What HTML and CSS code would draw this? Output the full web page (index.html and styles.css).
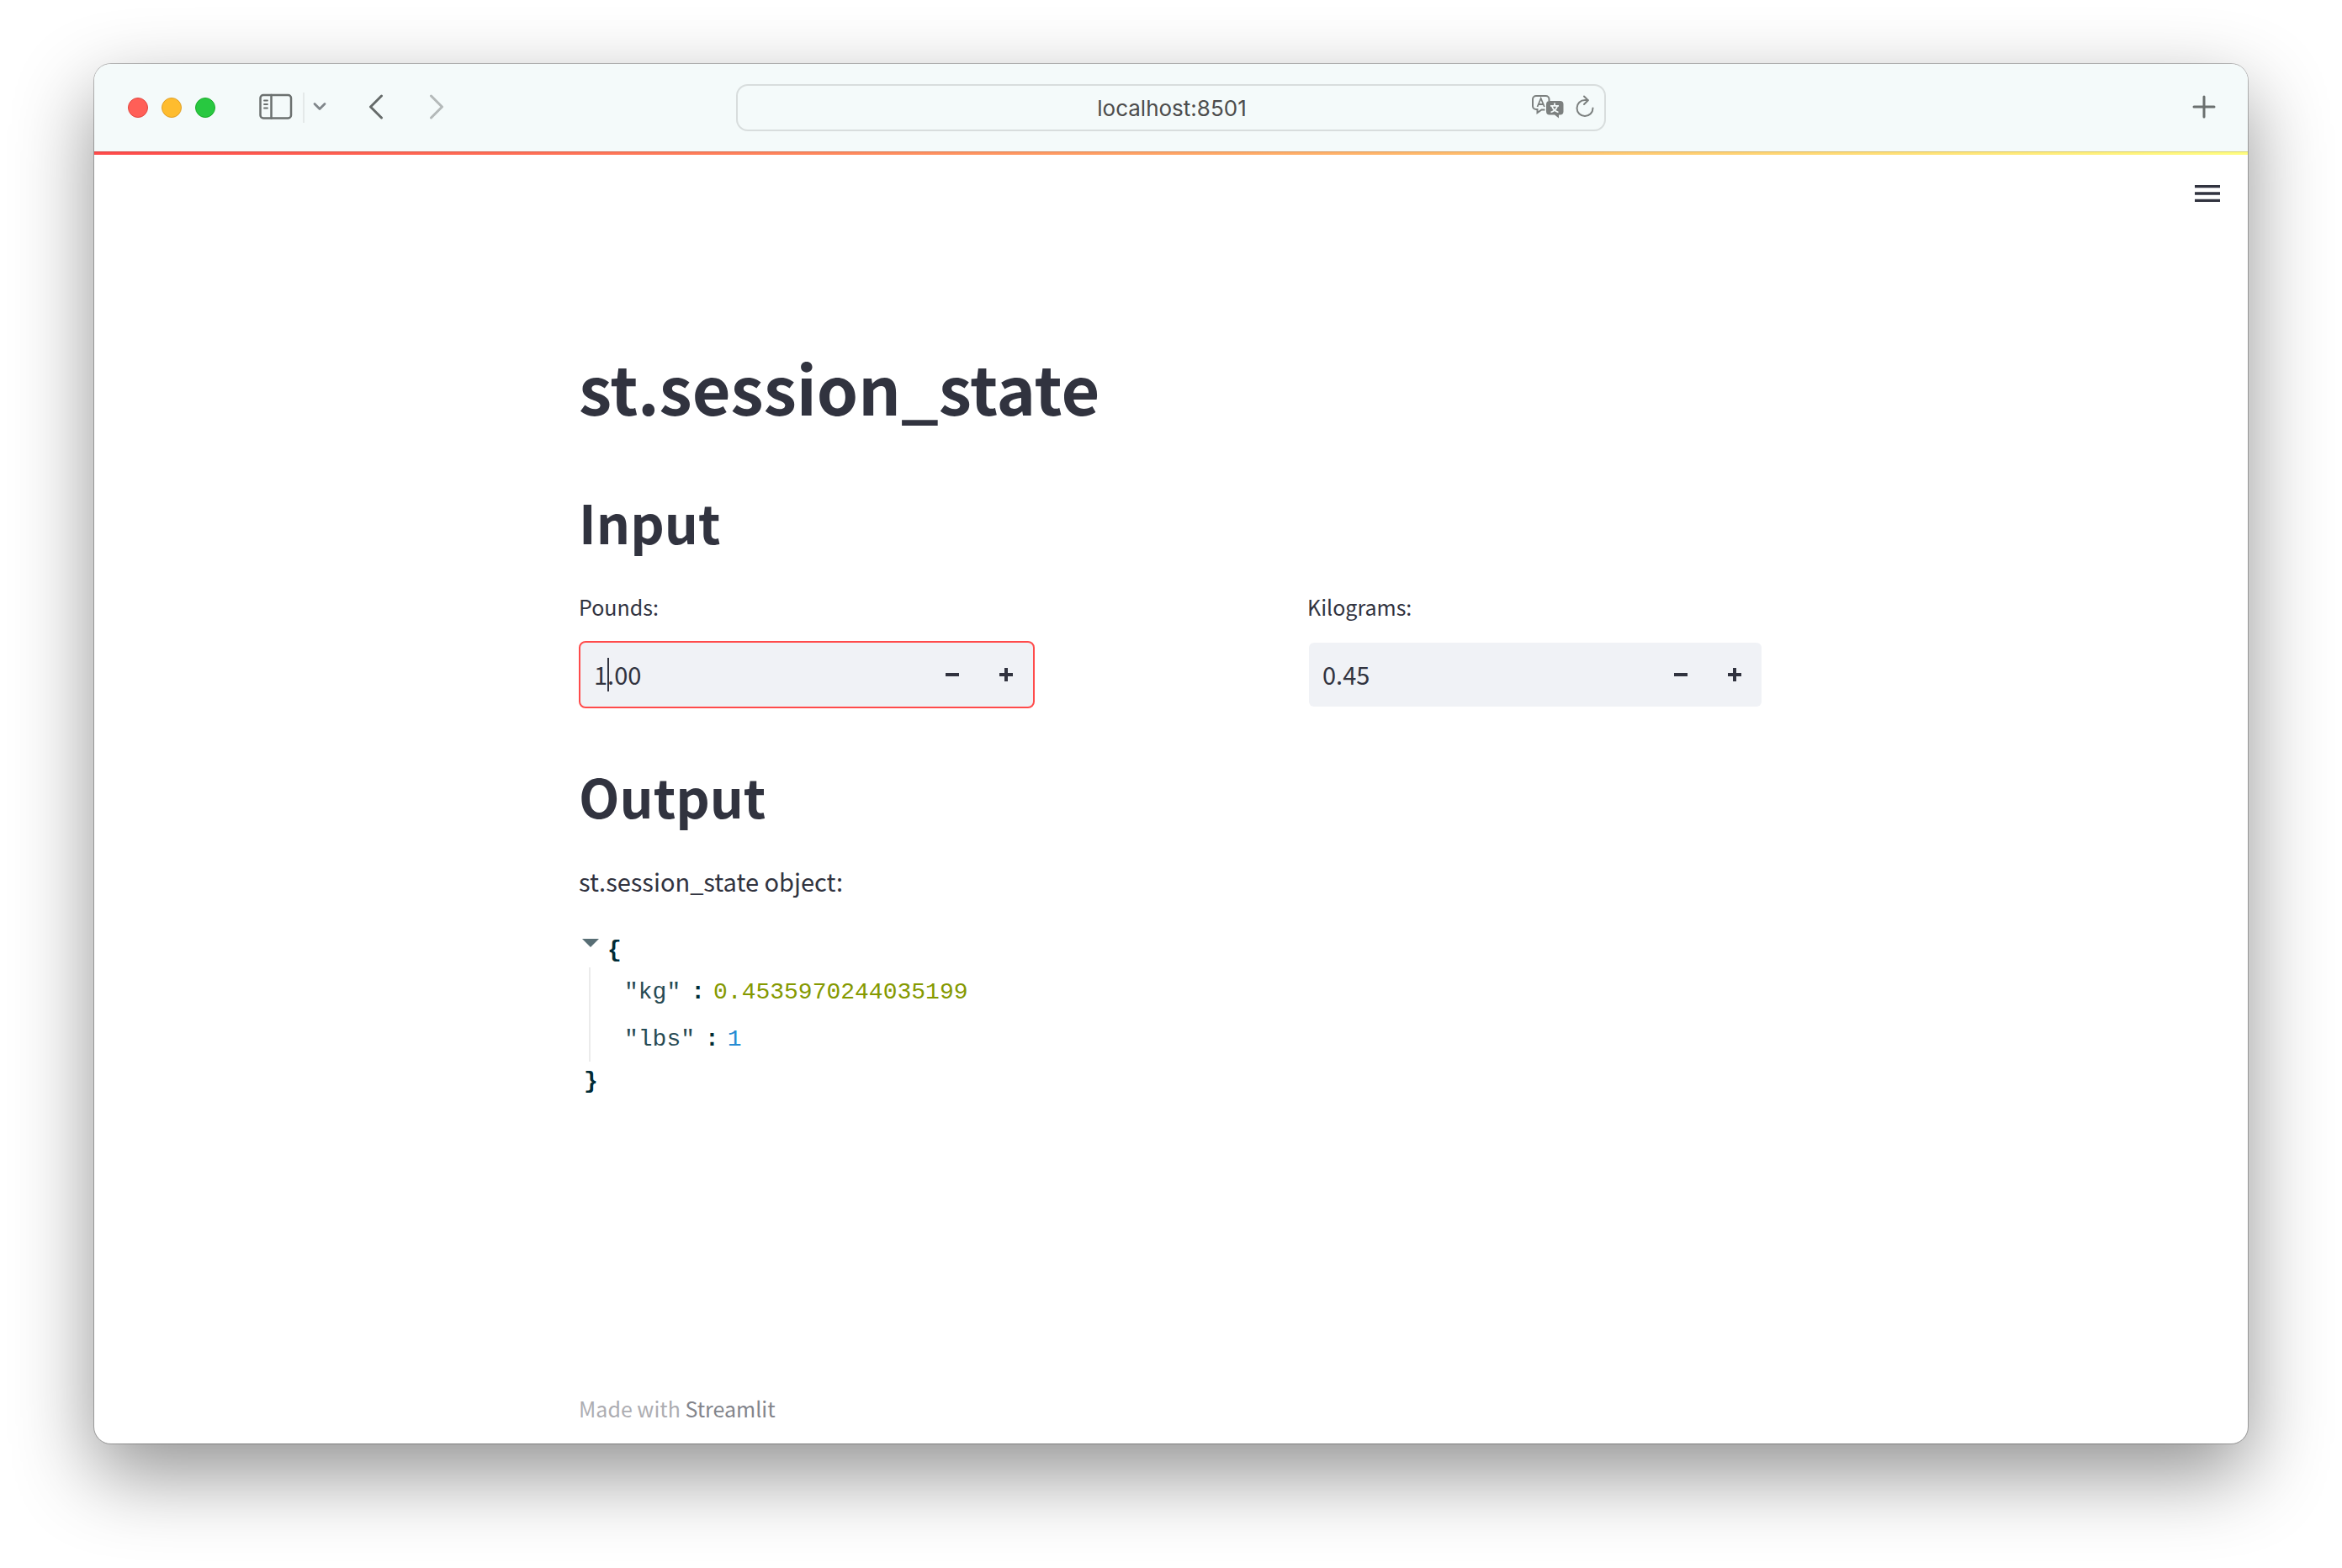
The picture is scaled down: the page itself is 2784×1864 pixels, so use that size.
FILE: index.html
```html
<!DOCTYPE html>
<html lang="en">
<head>
<meta charset="utf-8">
<title>st.session_state</title>
<link rel="stylesheet" href="styles.css">
</head>
<body>
<div class="window">
  <header class="toolbar">
    <div class="toolbar-left">
      <div class="lights">
        <button class="light light-close" aria-label="Close"></button>
        <button class="light light-min" aria-label="Minimize"></button>
        <button class="light light-max" aria-label="Zoom"></button>
      </div>
      <div class="sidebar-tools">
        <button class="tool" aria-label="Show sidebar">
          <svg width="40" height="32" viewBox="0 0 40 32" fill="none" stroke="#6b706f" stroke-width="2.5" stroke-linecap="round"><rect x="1.5" y="2" width="36.500" height="27.500" rx="3.500"/><path d="M14.500 2v27.500"/><path d="M6 8.500h4M6 13h4M6 17.500h4" stroke-width="1.800"/></svg>
        </button>
        <button class="tool tool-menu" aria-label="Sidebar menu">
          <svg width="16" height="12" viewBox="0 0 16 12" fill="none" stroke="#80868a" stroke-width="2.800" stroke-linecap="round" stroke-linejoin="round"><path d="M2 2.500l6 6 6-6"/></svg>
        </button>
      </div>
      <div class="history">
        <button class="tool" aria-label="Back">
          <svg width="18" height="30" viewBox="0 0 18 30" fill="none" stroke="#666b6a" stroke-width="3" stroke-linecap="round" stroke-linejoin="round"><path d="M15.500 2L2.500 15l13 13"/></svg>
        </button>
        <button class="tool" aria-label="Forward">
          <svg width="18" height="30" viewBox="0 0 18 30" fill="none" stroke="#b4b9b9" stroke-width="3" stroke-linecap="round" stroke-linejoin="round"><path d="M2.500 2l13 13-13 13"/></svg>
        </button>
      </div>
    </div>
    <div class="address">
      <input class="address-field" type="text" aria-label="Address" value="localhost:8501">
      <div class="address-tools">
        <button class="tool" aria-label="Translate">
          <svg width="38" height="28" viewBox="0 0 38 28" fill="none"><path d="M15.500 17.500h-4L6.500 21v-4H5a4 4 0 0 1-4-4V5a4 4 0 0 1 4-4h11.500a4 4 0 0 1 4 4v2" stroke="#7c807f" stroke-width="2"/><path d="M6.500 14L10.700 4l4.200 10M8 11h5.500" stroke="#7c807f" stroke-width="1.800"/><path d="M21 7h12.500a4 4 0 0 1 4 4v8.500a4 4 0 0 1-4 4H32v4l-5-4h-6a4 4 0 0 1-4-4V11a4 4 0 0 1 4-4z" fill="#7c807f"/><path d="M27 9.500v3M22 12.800h10M24 13.500c1 3.500 3.500 5.700 7.500 7M30 13.500c-1 3.500-3.500 5.700-7.500 7" stroke="#f4fafa" stroke-width="1.800"/></svg>
        </button>
        <button class="tool" aria-label="Reload">
          <svg width="22" height="28" viewBox="0 0 22 28" fill="none" stroke="#7c807f" stroke-width="2" stroke-linecap="round" stroke-linejoin="round"><path d="M20.500 15.500a9.500 9.500 0 1 1-9.500-9.500h3.500"/><path d="M10 1.500l4.800 4.700L10 11"/></svg>
        </button>
      </div>
    </div>
    <button class="tool new-tab" aria-label="New tab">
      <svg width="28" height="28" viewBox="0 0 28 28" fill="none" stroke="#6b706f" stroke-width="3" stroke-linecap="round"><path d="M14 2v24M2 14h24"/></svg>
    </button>
  </header>
  <div class="decoration"></div>
  <div class="app">
    <button class="main-menu" aria-label="Main menu">
      <svg width="30" height="20" viewBox="0 0 30 20" fill="#31333f"><path d="M0 0h30v3.300H0zM0 8.300h30v3.400H0zM0 16.700h30V20H0z"/></svg>
    </button>
    <main class="content">
      <h1>st.session_state</h1>
      <h2>Input</h2>
      <div class="columns">
        <div class="field">
          <label for="pounds">Pounds:</label>
          <div class="number number-focused">
            <input id="pounds" type="text" inputmode="decimal" value="1.00">
            <span class="caret"></span>
            <button class="step" aria-label="Decrease pounds"><svg width="16" height="16" viewBox="0 0 16 16" fill="#31333f"><path d="M0 6h16v4H0z"/></svg></button>
            <button class="step" aria-label="Increase pounds"><svg width="16" height="16" viewBox="0 0 16 16" fill="#31333f"><path d="M6 0h4v6h6v4h-6v6H6v-6H0V6h6z"/></svg></button>
          </div>
        </div>
        <div class="field">
          <label for="kilograms">Kilograms:</label>
          <div class="number">
            <input id="kilograms" type="text" inputmode="decimal" value="0.45">
            <button class="step" aria-label="Decrease kilograms"><svg width="16" height="16" viewBox="0 0 16 16" fill="#31333f"><path d="M0 6h16v4H0z"/></svg></button>
            <button class="step" aria-label="Increase kilograms"><svg width="16" height="16" viewBox="0 0 16 16" fill="#31333f"><path d="M6 0h4v6h6v4h-6v6H6v-6H0V6h6z"/></svg></button>
          </div>
        </div>
      </div>
      <h2>Output</h2>
      <p>st.session_state object:</p>
      <div class="json">
        <div class="json-open">
          <button class="collapse" aria-label="Collapse"><svg width="20" height="10" viewBox="0 0 20 10" fill="#586e75"><path d="M0 0h20L10 10z"/></svg></button>
          <span>{</span>
        </div>
        <div class="json-body">
          <div class="json-row"><span class="key">"kg"</span><span class="colon">:</span><span class="float">0.4535970244035199</span></div>
          <div class="json-row"><span class="key">"lbs"</span><span class="colon">:</span><span class="int">1</span></div>
        </div>
        <div class="json-close">}</div>
      </div>
    </main>
    <footer>Made with <a href="#">Streamlit</a></footer>
  </div>
</div>
</body>
</html>
```
FILE: styles.css
```css
* {
  box-sizing: border-box;
}

body {
  margin: 0;
  padding: 76px 112px 148px;
  background: #fff;
  color: #31333f;
  font-family: "Noto Sans CJK SC", sans-serif;
  font-size: 29px;
}

button {
  margin: 0;
  padding: 0;
  border: 0;
  background: none;
}

input {
  min-width: 0;
  padding: 0;
  border: 0;
  outline: 0;
  background: none;
  color: inherit;
  font: inherit;
}

svg {
  display: block;
}

.window {
  display: flex;
  flex-direction: column;
  min-height: calc(100vh - 224px);
  border-radius: 20px;
  background: #fff;
  box-shadow: 0 0 0 1px rgba(0, 0, 0, 0.25), 0 36px 94px rgba(0, 0, 0, 0.43);
}

.toolbar {
  display: grid;
  grid-template-columns: 1fr minmax(0, 1034px) 1fr;
  align-items: center;
  height: 104px;
  padding: 0 38px;
  border-radius: 20px 20px 0 0;
  background: #f4fafa;
}

.toolbar-left,
.lights,
.sidebar-tools,
.history,
.address,
.address-tools {
  display: flex;
  align-items: center;
}

.lights {
  gap: 16px;
  margin-left: 2px;
}

.light {
  width: 24px;
  height: 24px;
  border: 1px solid #e2463f;
  border-radius: 50%;
  background: #ff5f57;
}

.light-min {
  border-color: #e0a028;
  background: #febc2e;
}

.light-max {
  border-color: #1aab29;
  background: #28c840;
}

.tool {
  padding-bottom: 2px;
}

.sidebar-tools {
  gap: 12px;
  margin-left: 52px;
}

.tool-menu {
  padding: 11px 0 13px 10px;
  border-left: 2px solid #e4e9e9;
}

.history {
  gap: 54px;
  margin-left: 50px;
}

.address {
  height: 56px;
  padding: 0 12px;
  border: 2px solid #d8dddd;
  border-radius: 14px;
}

.address-field {
  flex: 1;
  margin-left: 76px;
  color: #4c4c4c;
  font: 26px Inter, sans-serif;
  text-align: center;
}

.address-tools {
  gap: 14px;
}

.new-tab {
  justify-self: end;
}

.decoration {
  height: 4px;
  border-top: 1px solid rgba(0, 0, 0, 0.15);
  background: linear-gradient(to right, #ff4b4b, #fffd80) border-box;
}

.app {
  display: flex;
  flex: 1;
  flex-direction: column;
}

.main-menu {
  align-self: flex-end;
  margin: 36px 33px 0 0;
}

.content,
footer {
  width: 100%;
  max-width: 1408px;
  margin: 0 auto;
}

.content {
  flex: 1;
  padding-top: 166px;
}

h1 {
  margin: 0 0 63px;
  font-size: 79px;
  font-weight: 700;
  line-height: 108px;
}

h2 {
  margin: 0;
  font-size: 63px;
  font-weight: 600;
  line-height: 86px;
}

.columns {
  display: grid;
  grid-template-columns: 1fr 1fr;
  gap: 324px;
  margin: 38px 0 61px;
}

.field {
  display: flex;
  flex-direction: column;
  gap: 21px;
}

label {
  font-size: 25px;
  line-height: 40px;
}

.number {
  position: relative;
  display: flex;
  height: 80px;
  padding-left: 16px;
  border: 2px solid transparent;
  border-radius: 8px;
  background: #f0f2f6 padding-box;
}

.number-focused {
  border-color: #ff4b4b;
}

.number input {
  flex: 1;
  padding-bottom: 2px;
}

.step {
  display: grid;
  width: 64px;
  place-items: center;
}

.caret {
  position: absolute;
  top: 18px;
  left: 32px;
  width: 2px;
  height: 40px;
  background: #31333f;
}

p {
  margin: 32px 0 37px;
  line-height: 52px;
}

.json {
  color: #002b36;
  font-family: "Liberation Mono", monospace;
  font-size: 28px;
}

.json-open {
  display: flex;
  gap: 10px;
  padding-left: 4px;
  font-weight: 700;
  line-height: 40px;
}

.collapse {
  align-self: flex-start;
  padding-top: 6px;
}

.json-body {
  margin-left: 12px;
  padding-left: 40px;
  border-left: 2px solid #ebebeb;
}

.json-row {
  display: flex;
  padding-top: 4px;
  line-height: 52px;
}

.key {
  opacity: 0.85;
}

.colon {
  margin: 0 10px 0 12px;
  font-weight: 700;
}

.float {
  color: #859900;
}

.int {
  color: #268bd2;
}

.json-close {
  padding-left: 6px;
  font-weight: 700;
  line-height: 48px;
}

footer {
  padding-bottom: 22px;
  color: #adadb2;
  font-size: 25px;
  line-height: 40px;
}

footer a {
  color: #83858c;
  text-decoration: none;
}
```
